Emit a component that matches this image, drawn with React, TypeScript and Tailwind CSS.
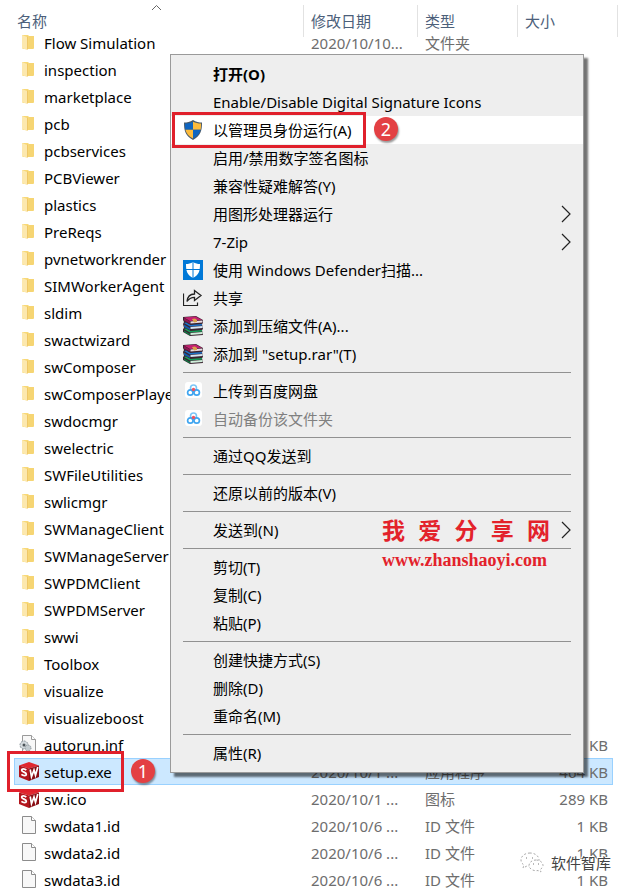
import React from "react";

function Folder() {
  return (
    <svg width="20" height="20" viewBox="-1 0 20 20" aria-hidden="true">
      <path d="M2 2h6l1 1h5v12l-1 1H3l-1-1z" fill="#f8d978" />
      <path d="M9 3h5v12l-1 1H8z" fill="#f6d573" />
      <path d="M2 2l5 2v13l-5-2z" fill="#fce8ae" />
      <path d="M7 4l1-1v13l-1 1z" fill="#efc767" />
    </svg>
  );
}

function Page() {
  return (
    <svg width="20" height="20" viewBox="-1 1 20 20" aria-hidden="true">
      <path d="M2.500 1.500h9l4 4v13h-13z" fill="#f8f8f8" stroke="#8c8c8c" />
      <path d="M11.500 1.500v4h4" fill="#fff" stroke="#8c8c8c" />
    </svg>
  );
}

function GearPage() {
  return (
    <svg width="20" height="20" viewBox="-1 1 20 20" aria-hidden="true">
      <path d="M2.500 1.500h9l4 4v13h-13z" fill="#f8f8f8" stroke="#9a9a9a" />
      <path d="M11.500 1.500v4h4" fill="#fff" stroke="#9a9a9a" />
      <circle cx="4" cy="11" r="4" fill="#d4dade" stroke="#8b959c" strokeDasharray="2 1" />
      <circle cx="4" cy="11" r="1.500" fill="#4b5358" />
      <circle cx="8" cy="14" r="3" fill="#c3cbd0" stroke="#7b868d" strokeDasharray="1 1" />
    </svg>
  );
}

function SwCube() {
  return (
    <svg width="20" height="20" viewBox="0 1 20 20" aria-hidden="true">
      <path d="M0 4.500 10 1l10 3.500-10 3z" fill="#e0282f" />
      <path d="M0 4.500l10 3V20L0 16z" fill="#b3161d" />
      <path d="M10 7.500l10-3V16l-10 4z" fill="#8a0e14" />
      <path d="M7.300 9.200C5.500 7.500 2.700 7.400 2.700 9.200c0 2 4.600 2 4.600 4 0 1.900-2.900 1.900-4.900.2" fill="none" stroke="#fff" strokeWidth="1.800" />
      <path d="M11.200 8.500l1.300 7.300L15 9l1.500 5.300L18.800 6" fill="none" stroke="#fff" strokeWidth="1.700" />
    </svg>
  );
}

function UacShield() {
  return (
    <svg width="20" height="20" viewBox="0 0 20 20" aria-hidden="true">
      <path d="M10 0c3 2 6 2.500 9 2.500 0 8-1 13-9 17.500C2 15.500 1 10.500 1 2.500 4 2.500 7 2 10 0z" fill="#4a5a68" />
      <path d="M10 1.800v8H2.400C2 8 2 6 2 3.600c3-.1 5.500-.6 8-1.800z" fill="#0f65c0" />
      <path d="M10 1.800v8h7.600c.4-1.800.4-3.800.4-6.200-3-.1-5.500-.6-8-1.800z" fill="#fdbb3b" />
      <path d="M10 9.800v8.700c-4.500-2.300-6.600-5-7.600-8.700z" fill="#fdbb3b" />
      <path d="M10 9.800v8.700c4.500-2.300 6.700-5 7.600-8.700z" fill="#0f65c0" />
    </svg>
  );
}

function Defender() {
  return (
    <svg width="20" height="20" viewBox="0 0 20 20" aria-hidden="true">
      <path d="M0 0h20v20H0z" fill="#0078d7" />
      <path d="M10 2c2.500 1.500 4.500 2 7 2 0 7-1 11-7 14C4 15 3 11 3 4c2.500 0 4.500-.5 7-2z" fill="#fff" />
      <path d="M10 2v17M3 9.500h14" stroke="#0078d7" />
    </svg>
  );
}

function Share() {
  return (
    <svg width="20" height="20" viewBox="0 0 20 20" fill="none" stroke="#222" aria-hidden="true">
      <path d="M.5 5.500v12h14v-3" strokeWidth="1.200" />
      <path d="M4 13.500c.5-5 3-7.500 7.500-7.500V2.500l6.500 5-6.500 5V9.300c-3.500 0-5.500 1-7.500 4.200z" strokeWidth="1.300" />
    </svg>
  );
}

function Rar() {
  return (
    <svg width="20" height="20" viewBox="0 0 20 20" aria-hidden="true">
      <path d="M0 1 13 0l7 4v3l-1 1 1 5-1 1 1 5-13 1-7-4v-3l1-1-1-4 1-2-1-2z" fill="#3a2430" />
      <path d="M1 1.500 12.500.5 19 4 7 5z" fill="#c2206f" />
      <path d="M1 2l6 3.500v2L1 4.500z" fill="#8f1553" />
      <path d="M7.500 5.500l12-1v2l-12 1z" fill="#eadbe2" />
      <path d="M1 7L7 10.500l12-1V8L7.500 9 3 6.500z" fill="#1f73c9" />
      <path d="M7.500 11l12-1v2l-12 1z" fill="#d5e6f3" />
      <path d="M1 8.500l6 3.500v2l-6-3z" fill="#175aa6" />
      <path d="M1 13L7 16.500l12-1V14L7.500 15 3 12.500z" fill="#17a05a" />
      <path d="M7.500 17l12-1v2l-12 1z" fill="#cfeeda" />
      <path d="M1 14.500L7 18v1.500L1 16z" fill="#0f7a44" />
      <path d="M9 3l3-.5 2 1.500v2l-3 .5z" fill="#d9a24a" />
    </svg>
  );
}

function Baidu() {
  return (
    <svg width="20" height="20" viewBox="0 0 20 20" fill="none" aria-hidden="true">
      <rect x="2" y="1" width="17" height="16" rx="3" fill="#fff" />
      <circle cx="10.500" cy="7" r="3" stroke="#7cc6f7" strokeWidth="1.600" />
      <circle cx="7.300" cy="11.500" r="2.700" stroke="#3fa5f0" strokeWidth="1.700" />
      <circle cx="13.700" cy="11.500" r="2.700" stroke="#3fa5f0" strokeWidth="1.700" />
      <circle cx="10.500" cy="8.500" r="1.700" fill="#ee5360" />
    </svg>
  );
}

function Arrow() {
  return (
    <svg width="10" height="18" viewBox="0 0 10 18" fill="none" stroke="#222" strokeWidth="1.200" aria-hidden="true">
      <path d="M1 1l8 8-8 8" />
    </svg>
  );
}

type FileRow = { name: string; icon?: () => React.ReactElement; date?: string; kind?: string; size?: string; selected?: boolean };

const folders = [
  "inspection", "marketplace", "pcb", "pcbservices", "PCBViewer", "plastics", "PreReqs",
  "pvnetworkrender", "SIMWorkerAgent", "sldim", "swactwizard", "swComposer", "swComposerPlayer",
  "swdocmgr", "swelectric", "SWFileUtilities", "swlicmgr", "SWManageClient", "SWManageServer",
  "SWPDMClient", "SWPDMServer", "swwi", "Toolbox", "visualize", "visualizeboost",
];

const rows: FileRow[] = [
  { name: "Flow Simulation", date: "2020/10/10...", kind: "文件夹" },
  ...folders.map((name) => ({ name })),
  { name: "autorun.inf", icon: GearPage, size: "KB" },
  { name: "setup.exe", icon: SwCube, date: "2020/10/1 ...", kind: "应用程序", size: "464 KB", selected: true },
  { name: "sw.ico", icon: SwCube, date: "2020/10/1 ...", kind: "图标", size: "289 KB" },
  { name: "swdata1.id", icon: Page, date: "2020/10/6 ...", kind: "ID 文件", size: "1 KB" },
  { name: "swdata2.id", icon: Page, date: "2020/10/6 ...", kind: "ID 文件", size: "1 KB" },
  { name: "swdata3.id", icon: Page, date: "2020/10/6 ...", kind: "ID 文件", size: "1 KB" },
];

type Item = { label: string; icon?: () => React.ReactElement; arrow?: boolean; bold?: boolean; muted?: boolean; hot?: boolean };

const groups: Item[][] = [
  [
    { label: "打开(O)", bold: true },
    { label: "Enable/Disable Digital Signature Icons" },
    { label: "以管理员身份运行(A)", icon: UacShield, hot: true },
    { label: "启用/禁用数字签名图标" },
    { label: "兼容性疑难解答(Y)" },
    { label: "用图形处理器运行", arrow: true },
    { label: "7-Zip", arrow: true },
    { label: "使用 Windows Defender扫描...", icon: Defender },
    { label: "共享", icon: Share },
    { label: "添加到压缩文件(A)...", icon: Rar },
    { label: "添加到 \"setup.rar\"(T)", icon: Rar },
  ],
  [
    { label: "上传到百度网盘", icon: Baidu },
    { label: "自动备份该文件夹", icon: Baidu, muted: true },
  ],
  [{ label: "通过QQ发送到" }],
  [{ label: "还原以前的版本(V)" }],
  [{ label: "发送到(N)", arrow: true }],
  [{ label: "剪切(T)" }, { label: "复制(C)" }, { label: "粘贴(P)" }],
  [{ label: "创建快捷方式(S)" }, { label: "删除(D)" }, { label: "重命名(M)" }],
  [{ label: "属性(R)" }],
];

function Step({ n }: { n: number }) {
  return (
    <span className="flex size-6 items-center justify-center rounded-full bg-[#e34043] text-lg leading-6 text-white shadow-[1px_2px_2px_#0006]">
      {n}
    </span>
  );
}

function ContextMenu() {
  return (
    <div role="menu" className="absolute top-[54px] left-[170px] w-[414px] border border-[#9a9a9a] bg-[#eeeeee] pt-[5px] pb-[5px] text-black shadow-[4px_4px_2px_#0000008c]">
      {groups.map((group, g) => (
        <div key={g} role="group" className={g ? "relative mt-1 pt-[5px] before:absolute before:top-0 before:right-3 before:left-3 before:h-px before:bg-[#919191]" : ""}>
          {group.map((item) => (
            <button
              key={item.label}
              role="menuitem"
              disabled={item.muted}
              className={`flex h-7 w-full items-center px-3 text-left whitespace-nowrap ${item.hot ? "bg-white" : ""} ${item.bold ? "font-bold" : ""} ${item.muted ? "text-[#808080]" : ""}`}
            >
              <span className="w-[30px] shrink-0">{item.icon && <item.icon />}</span>
              <span className="grow">{item.label}</span>
              {item.arrow && <Arrow />}
            </button>
          ))}
        </div>
      ))}
      <div className="pointer-events-none absolute top-[57px] left-px h-[36px] w-[194px] border-3 border-[#e0202b]" />
      <div className="pointer-events-none absolute top-[62px] left-[203px]"><Step n={2} /></div>
      <div className="pointer-events-none absolute top-[459px] left-[211px] w-[168px] text-[#e3222b]">
        <p className="flex justify-between text-[23px] leading-8 font-bold">
          {["我", "爱", "分", "享", "网"].map((c) => <span key={c}>{c}</span>)}
        </p>
        <p className="font-['Liberation_Serif',serif] text-lg leading-7 font-bold">www.zhanshaoyi.com</p>
      </div>
    </div>
  );
}

export default function App() {
  return (
    <main className="relative h-screen overflow-hidden bg-white font-['Noto_Sans','Noto_Sans_CJK_SC',sans-serif] text-[15px] leading-5 text-[#6d6d6d]">
      <table className="w-full table-fixed border-separate border-spacing-0">
        <colgroup>
          <col className="w-[303px]" />
          <col className="w-[114px]" />
          <col className="w-[100px]" />
          <col className="w-[100px]" />
          <col />
        </colgroup>
        <thead>
          <tr className="text-left leading-none text-[#4c607a]">
            <th className="relative p-0 pt-[14px] pl-[17px] font-normal">
              名称
              <svg className="absolute top-1 left-[151px]" width="11" height="8" viewBox="0 0 11 8" fill="none" stroke="#666" aria-hidden="true">
                <path d="M1 6l4.500-4.500L10 6" />
              </svg>
            </th>
            <th className="p-0 pt-[14px] pl-2 font-normal">修改日期</th>
            <th className="p-0 pt-[14px] pl-2 font-normal">类型</th>
            <th className="p-0 pt-[14px] pl-2 font-normal">大小</th>
            <th className="p-0" />
          </tr>
        </thead>
        <tbody>
          {rows.map((row) => {
            const Icon = row.icon ?? Folder;
            const fill = row.selected ? "border-[#99d1ff] bg-[#cce8ff]" : "border-transparent";
            return (
              <tr key={row.name} className="whitespace-nowrap">
                <td className="p-0">
                  <div className={`ml-[14px] flex h-[27px] items-center gap-[5px] border border-r-0 pl-1 text-black ${fill}`}>
                    <Icon />
                    {row.name}
                  </div>
                </td>
                <td className="p-0">
                  <div className={`flex h-[27px] items-center border-y pl-2 ${fill}`}>{row.date}</div>
                </td>
                <td className="p-0">
                  <div className={`flex h-[27px] items-center border-y pl-2 ${fill}`}>{row.kind}</div>
                </td>
                <td className="p-0">
                  <div className={`mr-1 flex h-[27px] items-center justify-end border border-l-0 pr-1 ${fill}`}>{row.size}</div>
                </td>
                <td className="p-0" />
              </tr>
            );
          })}
        </tbody>
      </table>
      {/* column dividers of the header */}
      <div className="pointer-events-none absolute top-[5px] left-[303px] flex h-8 w-[315px] border-r border-[#e2e2e2]">
        <span className="w-[114px] border-l border-[#e2e2e2]" />
        <span className="w-[100px] border-l border-[#e2e2e2]" />
        <span className="grow border-l border-[#e2e2e2]" />
      </div>
      <ContextMenu />
      <div className="pointer-events-none absolute top-[751px] left-[7px] h-[41px] w-[117px] border-3 border-[#e0202b]" />
      <div className="pointer-events-none absolute top-[759px] left-[131px]"><Step n={1} /></div>
      <div className="absolute top-[851px] left-[520px] flex items-center gap-[7px] text-[15px] leading-6 text-[#444] [text-shadow:-1px_-1px_0_#fff]">
        <svg width="24" height="22" viewBox="0 0 24 22" fill="#fff" stroke="#aaa" strokeDasharray="2 2" aria-hidden="true">
          <path d="M10 1c-5 0-9 3-9 7 0 2 1 4 3 5l-1 3 4-2c6 1 12-2 12-6s-4-7-9-7z" />
          <path d="M16 8c-4 0-7 2.500-7 5.500s4 6 9 5l3 1.500-1-2.500c2-1 3-2.500 3-4C23 10.500 20 8 16 8z" />
          <path d="M6 6h1M12 6h1M13 12h1M18 12h1" stroke="#777" strokeDasharray="none" />
        </svg>
        软件智库
      </div>
    </main>
  );
}
